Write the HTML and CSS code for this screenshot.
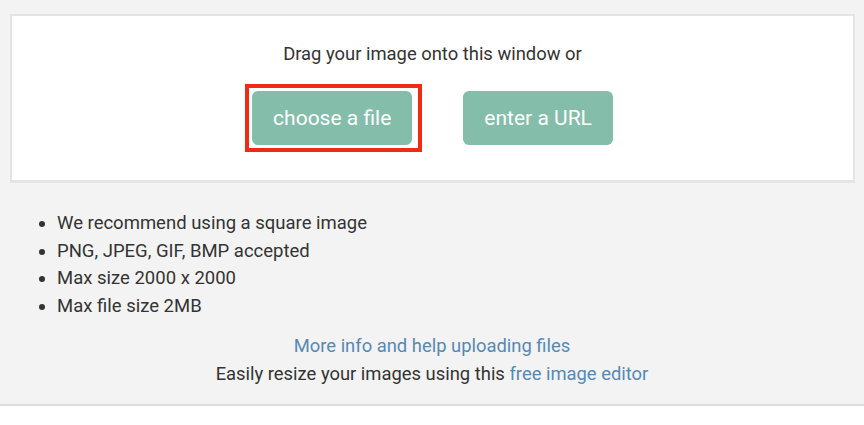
FILE: index.html
```html
<!DOCTYPE html>
<html lang="en">
<head>
<meta charset="utf-8">
<title>Upload image</title>
<link rel="stylesheet" href="styles.css">
</head>
<body>
<div class="page">
  <div class="wrap">
    <section class="drop">
      <p class="drop-text">Drag your image onto this window or</p>
      <div class="actions">
        <span class="btn-holder">
          <button class="btn">choose a file</button>
          <span class="highlight"></span>
        </span>
        <button class="btn">enter a URL</button>
      </div>
    </section>
  </div>
  <ul class="tips">
    <li>We recommend using a square image</li>
    <li>PNG, JPEG, GIF, BMP accepted</li>
    <li>Max size 2000 x 2000</li>
    <li>Max file size 2MB</li>
  </ul>
  <div class="help">
    <p><a href="#" class="link">More info and help uploading files</a></p>
    <p>Easily resize your images using this <a href="#" class="link">free image editor</a></p>
  </div>
</div>
</body>
</html>
```

FILE: styles.css
```css
html, body {
  margin: 0;
  padding: 0;
  background: #ffffff;
  font-family: Roboto, "Liberation Sans", sans-serif;
  color: #333333;
}

.page {
  background: #f3f3f3;
  border-bottom: 2px solid #dedede;
}

.wrap {
  padding: 14px 9px 0 10px;
}

.drop {
  background: #ffffff;
  border: 2px solid #e4e4e4;
  border-bottom-width: 3px;
  padding: 27px 0 35px;
  text-align: center;
}

.drop-text {
  margin: 0;
  font-size: 18.4px;
  line-height: 22px;
  color: #333333;
}

.actions {
  margin-top: 26px;
  display: flex;
  justify-content: center;
  gap: 51px;
}

.btn-holder {
  position: relative;
  display: inline-flex;
}

.btn {
  height: 54px;
  padding: 0 21px;
  border: 0;
  border-radius: 6px;
  background: #84bdaa;
  color: #ffffff;
  font-family: Roboto, "Liberation Sans", sans-serif;
  font-size: 21px;
  cursor: pointer;
}

.highlight {
  position: absolute;
  top: -7px;
  left: -7px;
  right: -10px;
  bottom: -7px;
  border: 4px solid #f02b14;
  pointer-events: none;
}

.tips {
  margin: 27px 0 0;
  padding-left: 57px;
  font-size: 18.5px;
  line-height: 27.7px;
  color: #333333;
}

.help {
  margin-top: 11px;
  padding-bottom: 16px;
  text-align: center;
  font-size: 18.4px;
  line-height: 28px;
}

.help p {
  margin: 0;
}

.link {
  color: #5589b5;
  text-decoration: none;
}
```
